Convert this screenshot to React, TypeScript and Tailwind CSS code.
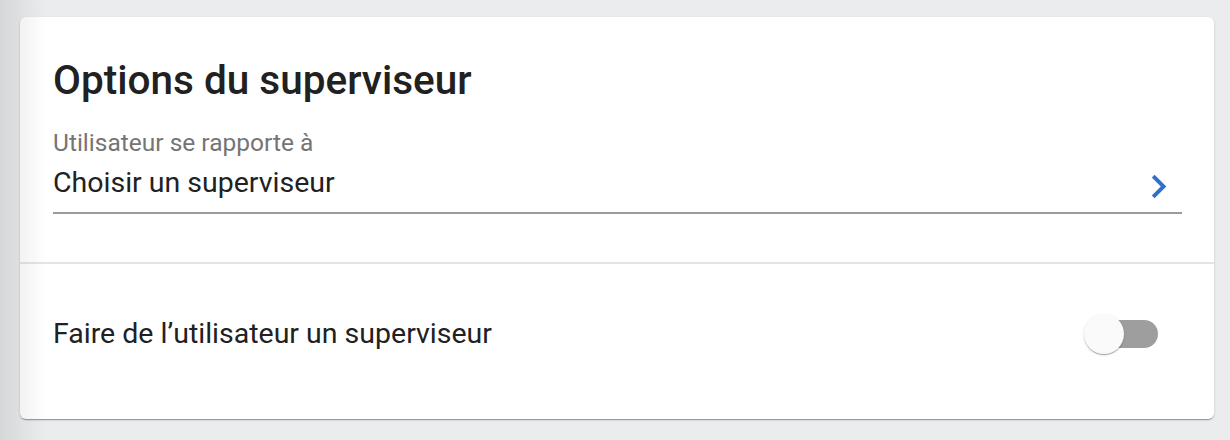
import React from "react";

export default function App() {
  return (
    <div
      className="relative h-[440px] w-full overflow-hidden bg-[#ebecee] pt-[17px] pl-[20px] pr-[16px]"
      style={{ fontFamily: "Roboto, 'Noto Sans', sans-serif" }}
    >
      <div className="rounded-[6px] bg-white shadow-[0_2px_1px_-1px_rgba(0,0,0,0.2),0_1px_1px_0_rgba(0,0,0,0.14),0_1px_3px_0_rgba(0,0,0,0.12)]">
        <div className="pl-[33px] pr-[32px] pt-[40px] pb-[48px]">
          <h2 className="text-[40.5px] leading-[46px] font-medium text-[#212121]">
            Options du superviseur
          </h2>
          <div className="mt-[26px] text-[24.5px] leading-[28px] text-[#757575]">
            Utilisateur se rapporte à
          </div>
          <div className="mt-[10px] border-b-2 border-[#9b9b9b] pb-[13px]">
            <div className="flex h-[32px] items-center justify-between">
              <span className="text-[28.5px] leading-[32px] text-[#212121]">
                Choisir un superviseur
              </span>
              <svg
                viewBox="0 0 24 24"
                className="mt-[6px] h-[47px] w-[47px] shrink-0"
                fill="#2f6fd1"
              >
                <path d="M10 6 8.59 7.41 13.17 12l-4.58 4.59L10 18l6-6z" />
              </svg>
            </div>
          </div>
        </div>
        <div className="h-[2px] bg-[#e4e4e4]" />
        <div className="pl-[33px] pr-[56px] pt-[46px] pb-[61px]">
          <div className="flex h-[48px] items-center justify-between">
            <span className="text-[28.5px] leading-[32px] text-[#212121]">
              Faire de l’utilisateur un superviseur
            </span>
            <div className="relative h-[28px] w-[68px] rounded-full bg-[#9e9e9e]">
              <div className="absolute left-[-6px] top-[-6px] h-[40px] w-[40px] rounded-full bg-[#fafafa] shadow-[0_2px_1px_-1px_rgba(0,0,0,0.2),0_1px_1px_0_rgba(0,0,0,0.14),0_1px_3px_0_rgba(0,0,0,0.12)]" />
            </div>
          </div>
        </div>
      </div>
      <div className="pointer-events-none absolute inset-y-0 left-0 w-[46px] bg-gradient-to-r from-[rgba(0,0,0,0.09)] to-transparent" />
    </div>
  );
}
